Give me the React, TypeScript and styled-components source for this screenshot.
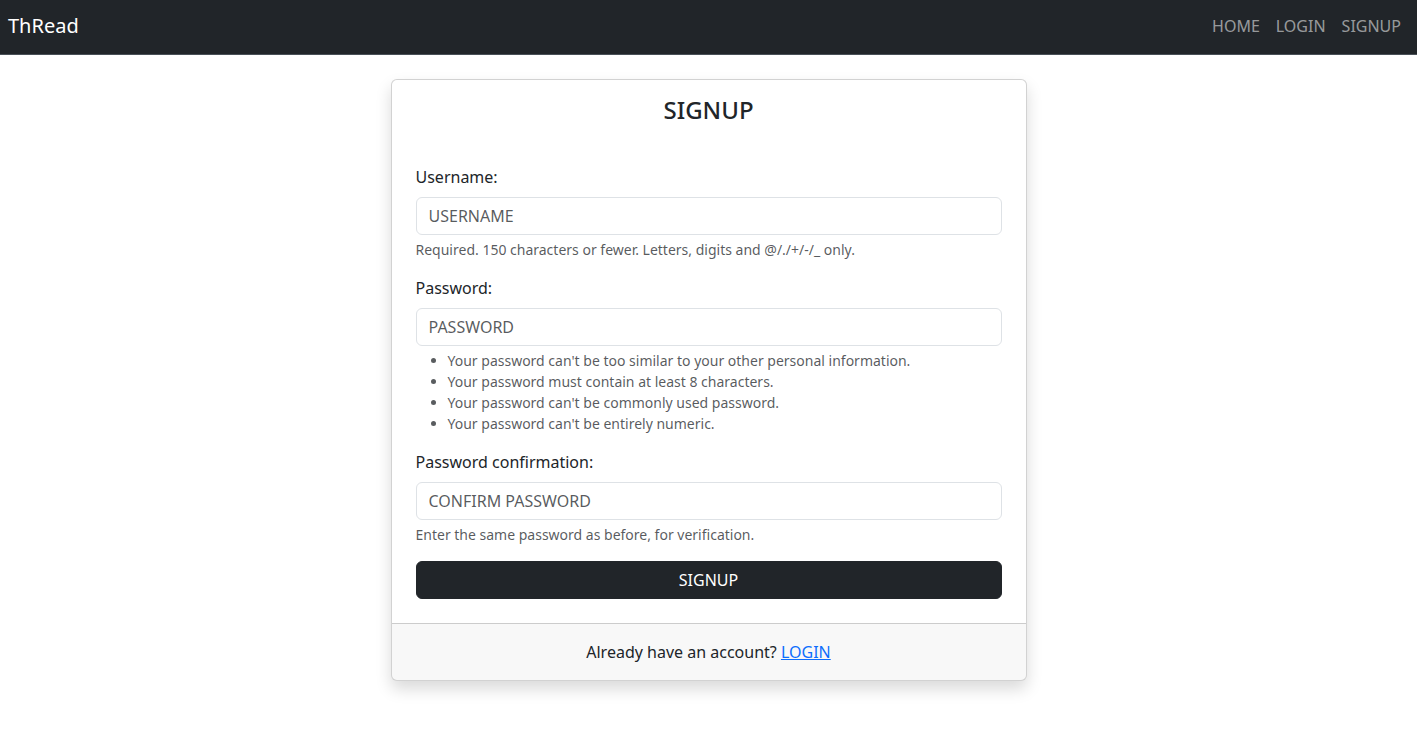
import React from "react";
import styled, { createGlobalStyle } from "styled-components";

const GlobalStyle = createGlobalStyle`
  *, *::before, *::after { box-sizing: border-box; }
  body {
    margin: 0;
    background: #fff;
    color: #212529;
    font-family: "Noto Sans", "Liberation Sans", sans-serif;
    font-size: 16px;
    line-height: 24px;
  }
`;

const Navbar = styled.nav`
  display: flex;
  align-items: center;
  justify-content: space-between;
  padding: 7px 0 9px;
  border-bottom: 1px solid #495057;
  background: #212529;
`;

const Brand = styled.a`
  padding: 4px 8px;
  color: #fff;
  font-size: 20px;
  line-height: 30px;
  text-decoration: none;
`;

const NavList = styled.ul`
  display: flex;
  margin: 0;
  padding: 0 8px;
  list-style: none;
`;

const NavLink = styled.a`
  display: block;
  padding: 8px;
  color: rgba(255, 255, 255, 0.55);
  line-height: 22px;
  text-decoration: none;
`;

const Main = styled.main`
  display: flex;
  justify-content: center;
  padding: 24px 12px;
`;

const Card = styled.section`
  width: 100%;
  max-width: 636px;
  border: 1px solid rgba(0, 0, 0, 0.175);
  border-radius: 6px;
  background: #fff;
  box-shadow: 0 8px 16px rgba(0, 0, 0, 0.15);
`;

const Title = styled.h1`
  margin: 0;
  padding: 16px 16px 10px;
  font-size: 24px;
  font-weight: 500;
  line-height: 27px;
  text-align: center;
`;

const Form = styled.form`
  display: flex;
  flex-direction: column;
  gap: 16px;
  padding: 32px 24px 24px;
`;

const Field = styled.div`
  display: flex;
  flex-direction: column;
`;

const Label = styled.label`
  margin-bottom: 8px;
`;

const Input = styled.input`
  width: 100%;
  padding: 6px 12px;
  border: 1px solid #dee2e6;
  border-radius: 6px;
  background: #fff;
  color: #212529;
  font: inherit;
  &::placeholder {
    color: rgba(33, 37, 41, 0.75);
    opacity: 1;
  }
`;

const Help = styled.div`
  margin-top: 4px;
  color: rgba(33, 37, 41, 0.75);
  font-size: 14px;
  line-height: 21px;
`;

const Rules = styled.ul`
  margin: 0;
  padding-left: 32px;
`;

const Submit = styled.button`
  padding: 6px 12px;
  border: 1px solid #212529;
  border-radius: 6px;
  background: #212529;
  color: #fff;
  font: inherit;
  cursor: pointer;
`;

const CardFooter = styled.footer`
  padding: 16px;
  border-top: 1px solid rgba(0, 0, 0, 0.175);
  border-radius: 0 0 5px 5px;
  background: rgba(33, 37, 41, 0.03);
  text-align: center;
`;

const Link = styled.a`
  color: #0d6efd;
  text-decoration: underline;
`;

const navItems = ["HOME", "LOGIN", "SIGNUP"];

const passwordRules = [
  "Your password can't be too similar to your other personal information.",
  "Your password must contain at least 8 characters.",
  "Your password can't be commonly used password.",
  "Your password can't be entirely numeric.",
];

export default function App() {
  return (
    <>
      <GlobalStyle />
      <Navbar>
        <Brand href="#">ThRead</Brand>
        <NavList>
          {navItems.map((item) => (
            <li key={item}>
              <NavLink href={`#${item.toLowerCase()}`}>{item}</NavLink>
            </li>
          ))}
        </NavList>
      </Navbar>
      <Main>
        <Card>
          <Title>SIGNUP</Title>
          <Form onSubmit={(event) => event.preventDefault()}>
            <Field>
              <Label htmlFor="username">Username:</Label>
              <Input id="username" type="text" placeholder="USERNAME" aria-describedby="username-help" />
              <Help id="username-help">
                Required. 150 characters or fewer. Letters, digits and @/./+/-/_ only.
              </Help>
            </Field>
            <Field>
              <Label htmlFor="password">Password:</Label>
              <Input id="password" type="password" placeholder="PASSWORD" aria-describedby="password-help" />
              <Help id="password-help">
                <Rules>
                  {passwordRules.map((rule) => (
                    <li key={rule}>{rule}</li>
                  ))}
                </Rules>
              </Help>
            </Field>
            <Field>
              <Label htmlFor="confirm">Password confirmation:</Label>
              <Input id="confirm" type="password" placeholder="CONFIRM PASSWORD" aria-describedby="confirm-help" />
              <Help id="confirm-help">Enter the same password as before, for verification.</Help>
            </Field>
            <Submit type="submit">SIGNUP</Submit>
          </Form>
          <CardFooter>
            Already have an account? <Link href="#login">LOGIN</Link>
          </CardFooter>
        </Card>
      </Main>
    </>
  );
}
